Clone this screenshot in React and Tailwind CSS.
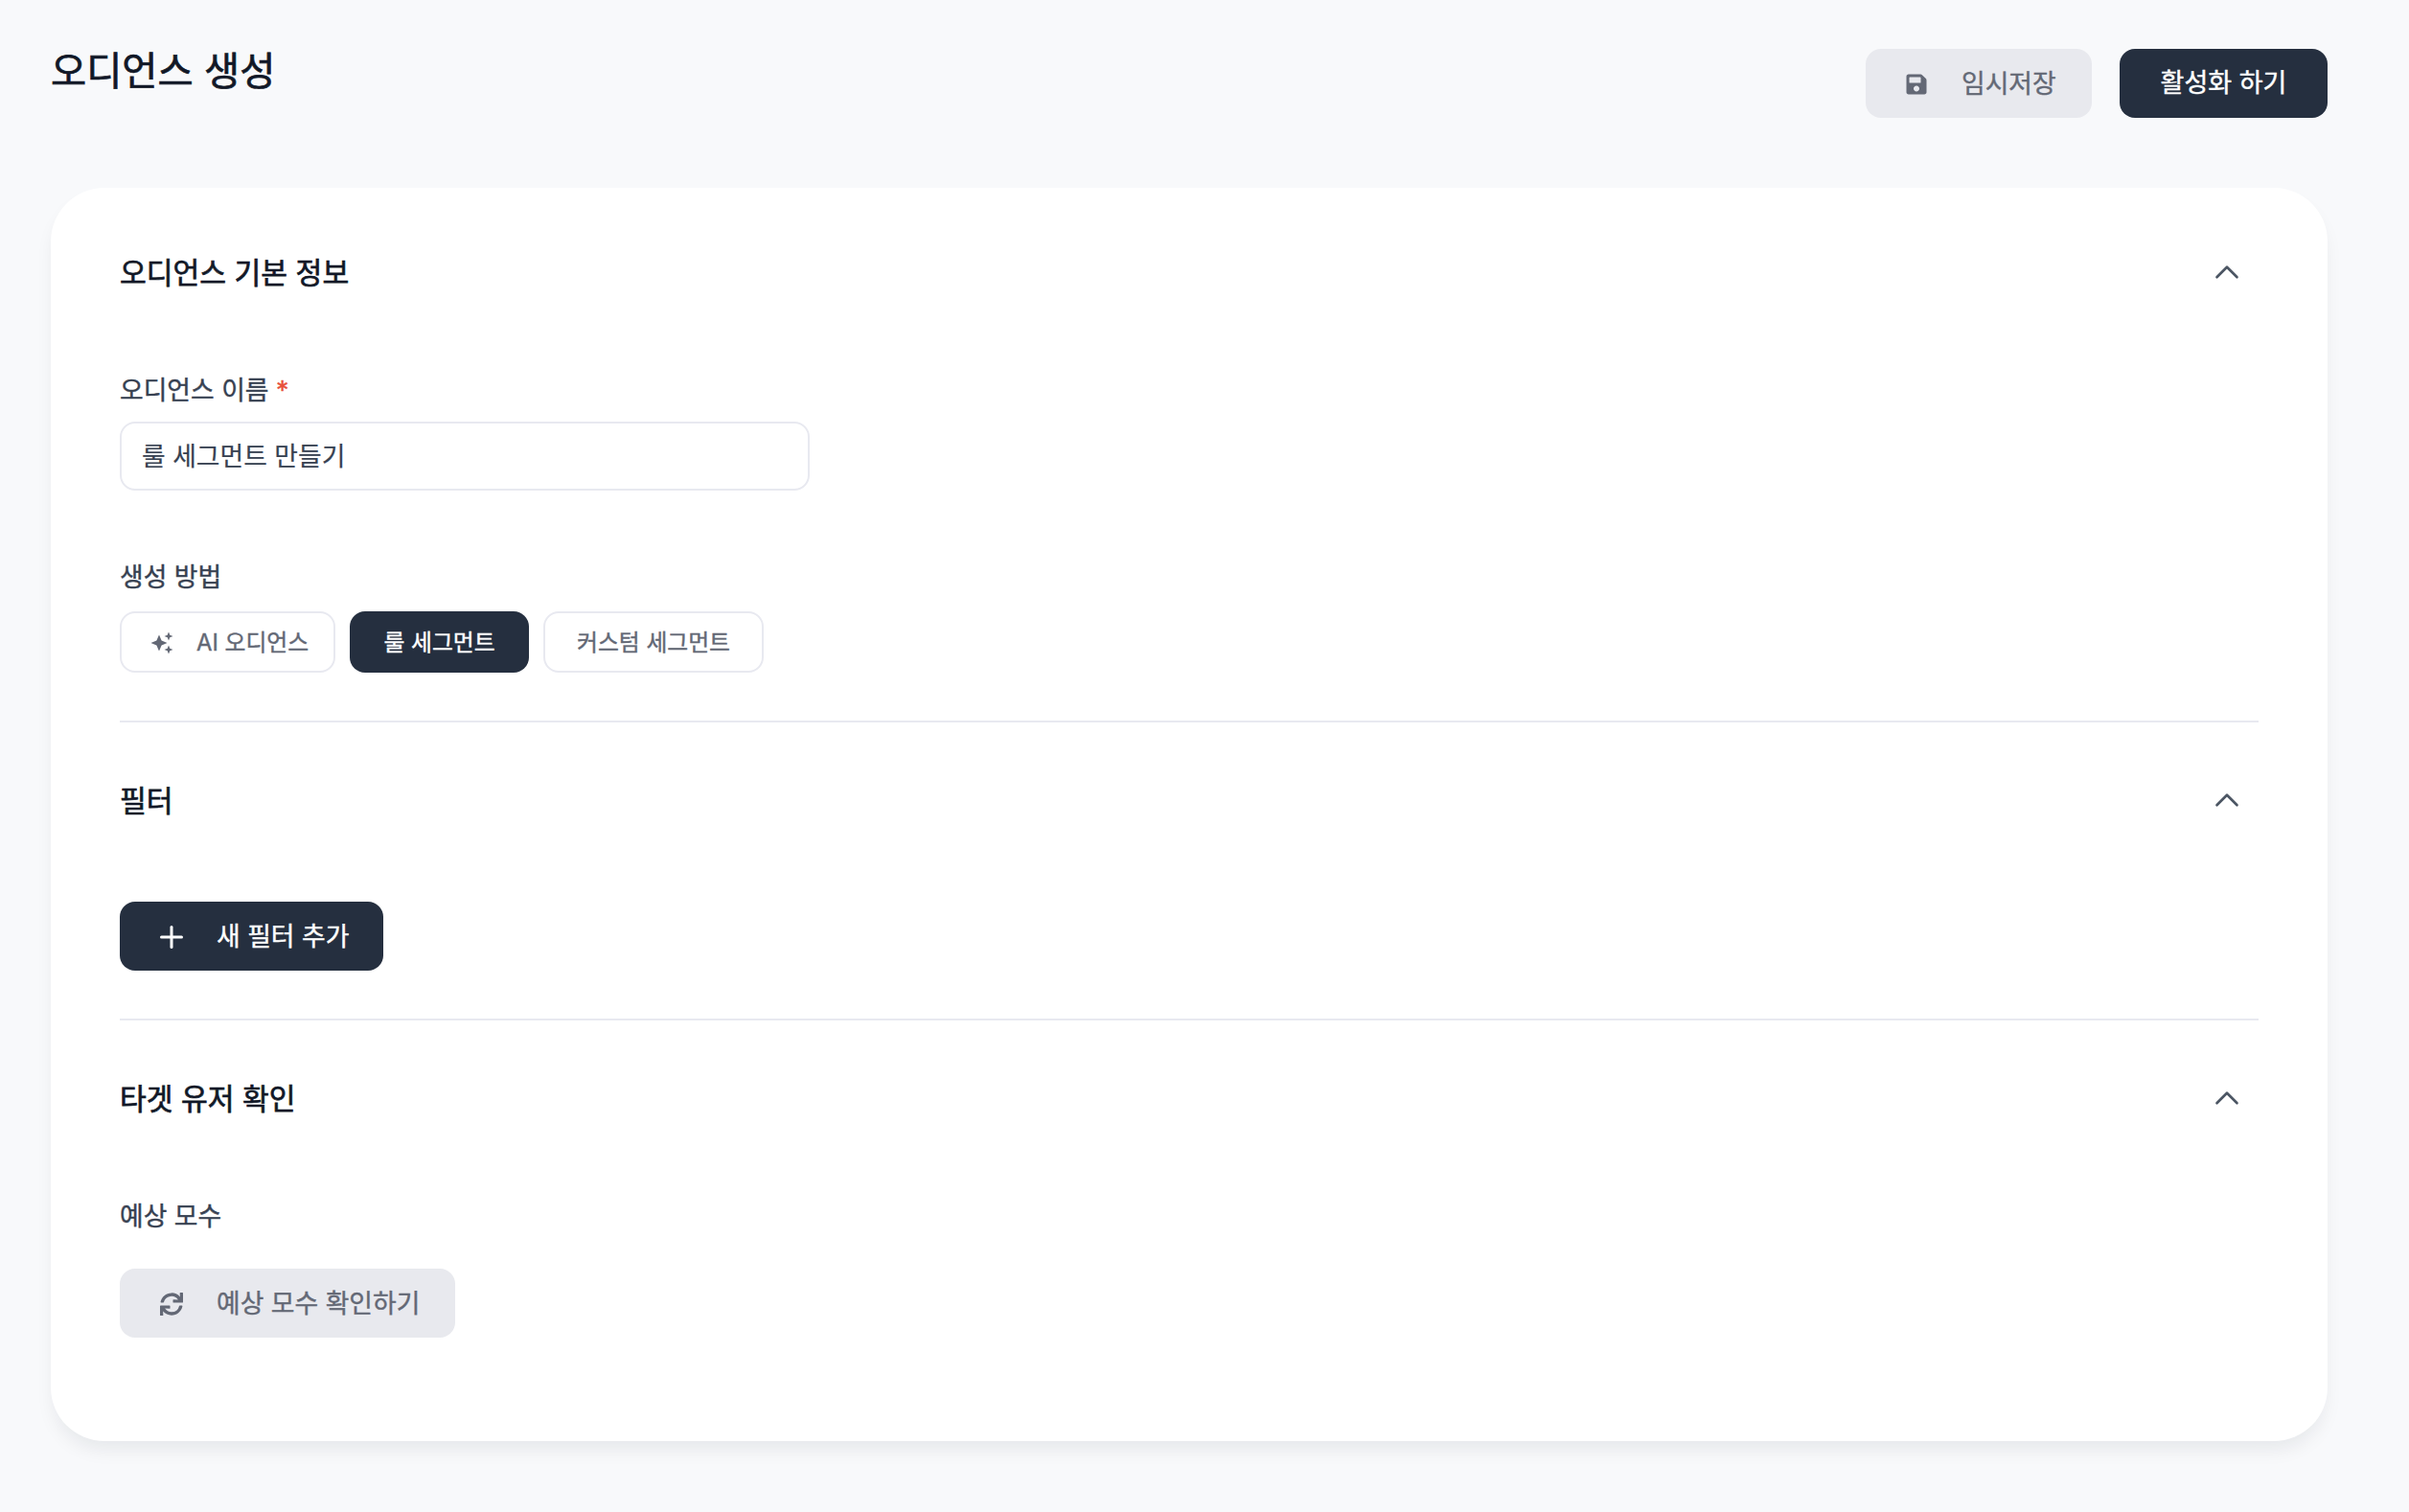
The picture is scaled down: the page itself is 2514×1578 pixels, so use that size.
import { ChevronUp, Plus } from 'lucide-react';
import { FaSave, FaSync } from 'react-icons/fa';

const font = 'font-["Inter","Noto_Sans_CJK_KR",sans-serif]';
const medium = '[-webkit-text-stroke:0.4px_currentColor]';
const strong = '[-webkit-text-stroke:0.7px_currentColor]';

function SectionHead({ title }) {
  return (
    <div className="flex items-center justify-between h-[32px]">
      <h2 className={`text-[30.2px] leading-[32px] pt-[2px] text-[#111827] ${strong}`}>{title}</h2>
      <ChevronUp className="w-[42px] h-[42px] mr-[12px] text-[#4b5563]" strokeWidth={1.5} />
    </div>
  );
}

function Label({ children }) {
  return <div className={`text-[26.8px] leading-[32px] text-[#374151] ${medium}`}>{children}</div>;
}

function Sparkle() {
  return (
    <svg viewBox="0 0 24 24" className="w-[24px] h-[24px]" fill="currentColor">
      <path d="M9 3.500l2.600 5.900 5.900 2.600-5.900 2.600-2.600 5.900-2.600-5.900-5.900-2.600 5.900-2.600z" />
      <path d="M19 .5l1.300 3.200 3.200 1.300-3.200 1.300-1.300 3.200-1.300-3.200-3.200-1.300 3.200-1.300z" />
      <path d="M19 14.500l1.300 3.200 3.200 1.300-3.200 1.300-1.300 3.200-1.300-3.200-3.200-1.300 3.200-1.300z" />
    </svg>
  );
}

export default function App() {
  return (
    <div className={`${font} min-h-[1578px] bg-[#f8f9fb] pl-[53px] pr-[85px] pt-[50px]`}>
      <div className="flex items-start justify-between h-[146px]">
        <h1 className={`text-[40.4px] leading-[46px] mt-[2px] text-[#111827] ${strong}`}>오디언스 생성</h1>
        <div className="flex gap-[29px] pt-[1px]">
          <button className={`flex items-center gap-[35px] pl-[41px] w-[236px] h-[72px] rounded-[16px] bg-[#e8e9ee] text-[26.8px] pt-[1px] text-[#636875] ${medium}`}>
            <span className="w-[24px] flex justify-center"><FaSave className="w-[24px] h-[24px]" /></span>
            임시저장
          </button>
          <button className={`w-[217px] h-[72px] rounded-[16px] bg-[#252f3f] text-[27px] pt-[1px] text-white ${medium}`}>활성화 하기</button>
        </div>
      </div>

      <div className="bg-white rounded-[56px] shadow-[0_12px_20px_-4px_rgba(17,24,39,0.08)] px-[72px] pt-[72px] h-[1308px]">
        <SectionHead title="오디언스 기본 정보" />
        <div className="mt-[91px]">
          <Label>오디언스 이름 <span className="text-[#e8503a]">*</span></Label>
          <div className="mt-[17px] w-[720px] h-[72px] flex items-center px-[21px] pt-[1px] border-2 border-[#e8e9f0] rounded-[16px] text-[26.8px] text-[#374151] [-webkit-text-stroke:0.2px_currentColor]">룰 세그먼트 만들기</div>
        </div>
        <div className="mt-[74px]">
          <Label>생성 방법</Label>
          <div className="mt-[20px] flex gap-[15px]">
            <button className={`flex items-center gap-[24px] pl-[30px] w-[225px] h-[64px] rounded-[16px] bg-white border-2 border-[#e8e9f0] text-[23.8px] pt-[1px] text-[#636875] ${medium}`}>
              <Sparkle />
              AI 오디언스
            </button>
            <button className={`w-[187px] h-[64px] rounded-[16px] bg-[#252f3f] text-[23.8px] pt-[1px] text-white ${medium}`}>룰 세그먼트</button>
            <button className={`w-[230px] h-[64px] rounded-[16px] bg-white border-2 border-[#e8e9f0] text-[23.8px] pt-[1px] text-[#636875] ${medium}`}>커스텀 세그먼트</button>
          </div>
        </div>
        <div className="mt-[50px] border-t-2 border-[#e8e9f0] pt-[65px]">
          <SectionHead title="필터" />
          <button className={`mt-[90px] flex items-center gap-[35px] pl-[42px] w-[275px] h-[72px] rounded-[16px] bg-[#252f3f] text-[26.8px] pt-[1px] text-white ${medium}`}>
            <span className="w-[24px] flex justify-center"><Plus className="w-[36px] h-[36px] shrink-0" strokeWidth={2} /></span>
            새 필터 추가
          </button>
        </div>
        <div className="mt-[50px] border-t-2 border-[#e8e9f0] pt-[65px]">
          <SectionHead title="타겟 유저 확인" />
          <div className="mt-[91px]">
            <Label>예상 모수</Label>
            <button className={`mt-[39px] flex items-center gap-[35px] pl-[42px] w-[350px] h-[72px] rounded-[16px] bg-[#e8e9ee] text-[26.8px] pt-[1px] text-[#636875] ${medium}`}>
              <span className="w-[24px] flex justify-center"><FaSync className="w-[24px] h-[24px]" /></span>
              예상 모수 확인하기
            </button>
          </div>
        </div>
      </div>
    </div>
  );
}
